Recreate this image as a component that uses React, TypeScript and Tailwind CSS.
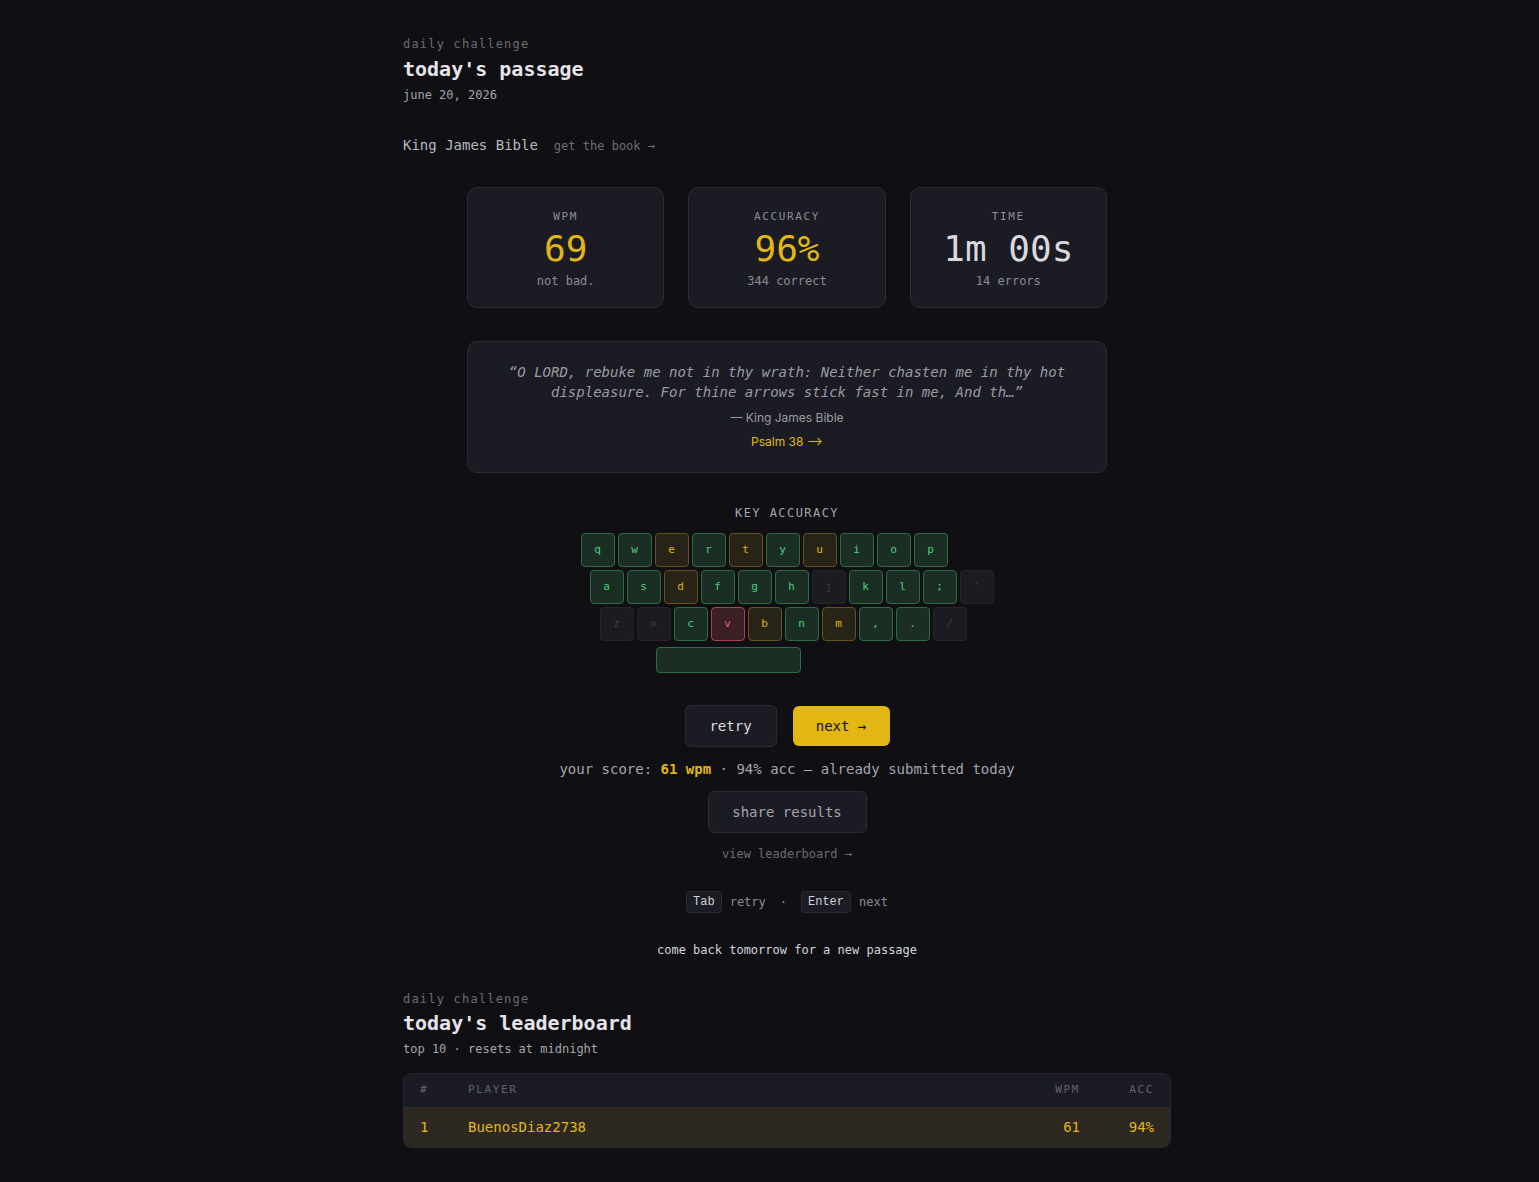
type Tone = "good" | "warn" | "bad" | "none";

const rows: { offset: string; keys: [string, Tone][] }[] = [
  {
    offset: "pl-0",
    keys: [
      ["q", "good"], ["w", "good"], ["e", "warn"], ["r", "good"], ["t", "warn"],
      ["y", "good"], ["u", "warn"], ["i", "good"], ["o", "good"], ["p", "good"],
    ],
  },
  {
    offset: "pl-[9px]",
    keys: [
      ["a", "good"], ["s", "good"], ["d", "warn"], ["f", "good"], ["g", "good"],
      ["h", "good"], ["j", "none"], ["k", "good"], ["l", "good"], [";", "good"], ["'", "none"],
    ],
  },
  {
    offset: "pl-[19px]",
    keys: [
      ["z", "none"], ["x", "none"], ["c", "good"], ["v", "bad"], ["b", "warn"],
      ["n", "good"], ["m", "warn"], [",", "good"], [".", "good"], ["/", "none"],
    ],
  },
];

const toneClass: Record<Tone, string> = {
  good: "bg-[#1a2e23] border-[#2c6b45] text-[#4ccf7c]",
  warn: "bg-[#282317] border-[#66521a] text-[#e0b21a]",
  bad: "bg-[#3a1f24] border-[#a4434d] text-[#e5606c]",
  none: "bg-[#1b1b22] border-[#24242c] text-[#3c3c46]",
};

function Key({ label, tone }: { label: string; tone: Tone }) {
  return (
    <div
      className={`w-[34px] h-[34px] rounded-[4px] border flex items-center justify-center text-[11px] ${toneClass[tone]}`}
    >
      {label}
    </div>
  );
}

function Stat({ label, value, sub, accent }: { label: string; value: string; sub: string; accent?: boolean }) {
  return (
    <div className="h-[121px] rounded-[10px] border border-[#2a2b33] bg-[#1b1c23] flex flex-col items-center pt-[21px]">
      <div className="text-[11px] tracking-[0.15em] text-[#8b8b95] leading-4">{label}</div>
      <div className={`mt-1 text-[36px] leading-10 ${accent ? "text-[#e2b714]" : "text-[#d8d8de]"}`}>{value}</div>
      <div className="mt-1 text-xs leading-4 text-[#8b8b95]">{sub}</div>
    </div>
  );
}

function Kbd({ children }: { children: string }) {
  return (
    <kbd className="h-[22px] px-[6px] rounded border border-[#2a2b33] bg-[#1b1c23] text-[#d0d0d8] flex items-center">
      {children}
    </kbd>
  );
}

export default function App() {
  return (
    <div
      className="min-h-screen bg-[#101014] text-[#d8d8de] flex justify-center"
      style={{ fontFamily: '"DejaVu Sans Mono", "Liberation Mono", monospace' }}
    >
      <div className="w-[803px] pl-[35px] pt-9 pb-10">
        {/* passage header */}
        <div className="text-xs leading-4 tracking-[0.1em] text-[#6b6b75]">daily challenge</div>
        <h1 className="mt-[3px] text-xl leading-7 font-bold text-[#e4e4ea]">today's passage</h1>
        <div className="mt-1 text-xs leading-4 text-[#a4a4ae]">june 20, 2026</div>

        <div className="mt-8 flex items-baseline gap-4">
          <span className="text-sm leading-5 text-[#b8b8c2]">King James Bible</span>
          <span className="text-xs text-[#6e6e78]">get the book →</span>
        </div>

        <div className="mx-auto w-[640px]">
          <div className="mt-8 grid grid-cols-3 gap-6">
            <Stat label="WPM" value="69" sub="not bad." accent />
            <Stat label="ACCURACY" value="96%" sub="344 correct" accent />
            <Stat label="TIME" value="1m 00s" sub="14 errors" />
          </div>

          {/* quote */}
          <div className="mt-[33px] rounded-[10px] border border-[#2a2b33] bg-[#1b1c23] px-10 pt-5 pb-[22px] text-center">
            <p className="text-sm leading-5 italic text-[#9a9aa4]">
              “O LORD, rebuke me not in thy wrath: Neither chasten me in thy hot displeasure. For thine arrows stick
              fast in me, And th…”
            </p>
            <div className="mt-2 text-xs leading-4 text-[#9a9aa4]" style={{ fontFamily: "Inter, sans-serif" }}>
              — King James Bible
            </div>
            <div className="mt-2 text-xs leading-4 text-[#e2b714]" style={{ fontFamily: "Inter, sans-serif" }}>
              Psalm 38 ⟶
            </div>
          </div>

          {/* key heatmap */}
          <div className="mt-8 text-center text-xs leading-4 tracking-[0.12em] text-[#a4a4ae]">KEY ACCURACY</div>
          <div className="mt-3 flex justify-center">
            <div className="w-[413px] flex flex-col gap-[3px]">
              {rows.map((row, i) => (
                <div key={i} className={`flex gap-[3px] ${row.offset}`}>
                  {row.keys.map(([k, t]) => (
                    <Key key={k} label={k} tone={t} />
                  ))}
                </div>
              ))}
              <div className="pl-[75px] mt-[3px]">
                <div className="w-[145px] h-[26px] rounded-[4px] border border-[#2c6b45] bg-[#1a2e23]" />
              </div>
            </div>
          </div>

          {/* actions */}
          <div className="mt-8 flex justify-center gap-4">
            <button className="w-[92px] h-[42px] rounded-md border border-[#2a2b33] bg-[#1b1c23] text-sm text-[#dcdce2]">
              retry
            </button>
            <button className="w-[97px] h-[40px] mt-px rounded-md bg-[#e2b714] text-sm text-[#111114]">
              next →
            </button>
          </div>

          <div className="mt-3 text-center text-sm leading-5 text-[#a4a4ae]">
            your score: <span className="font-bold text-[#e2b714]">61 wpm</span> · 94% acc — already submitted today
          </div>

          <div className="mt-3 flex justify-center">
            <button className="w-[159px] h-[42px] rounded-md border border-[#2a2b33] bg-[#1b1c23] text-sm text-[#a4a4ae]">
              share results
            </button>
          </div>

          <div className="mt-[13px] text-center text-xs leading-4 text-[#6b6b75]">view leaderboard →</div>

          <div className="mt-[29px] flex justify-center items-center gap-2 text-xs text-[#8b8b95]">
            <Kbd>Tab</Kbd>
            <span>retry</span>
            <span className="px-[6px]">·</span>
            <Kbd>Enter</Kbd>
            <span>next</span>
          </div>

          <div className="mt-[29px] text-center text-xs leading-4 text-[#d4d4dc]">
            come back tomorrow for a new passage
          </div>
        </div>

        {/* leaderboard */}
        <div className="mt-[33px] text-xs leading-4 tracking-[0.1em] text-[#6b6b75]">daily challenge</div>
        <h2 className="mt-[2px] text-xl leading-7 font-bold text-[#e4e4ea]">today's leaderboard</h2>
        <div className="mt-1 text-xs leading-4 text-[#a4a4ae]">top 10 · resets at midnight</div>

        <div className="mt-4 rounded-lg border border-[#26262e] overflow-hidden">
          <div className="h-[33px] grid grid-cols-[48px_1fr_80px_74px] items-center px-4 bg-[#1b1c23] text-[11px] tracking-[0.15em] text-[#62626c]">
            <span>#</span>
            <span>PLAYER</span>
            <span className="text-right">WPM</span>
            <span className="text-right">ACC</span>
          </div>
          <div className="h-[40px] grid grid-cols-[48px_1fr_80px_74px] items-center px-4 bg-[#2d2920] text-sm text-[#e2b714]">
            <span>1</span>
            <span>BuenosDiaz2738</span>
            <span className="text-right">61</span>
            <span className="text-right">94%</span>
          </div>
        </div>
      </div>
    </div>
  );
}
